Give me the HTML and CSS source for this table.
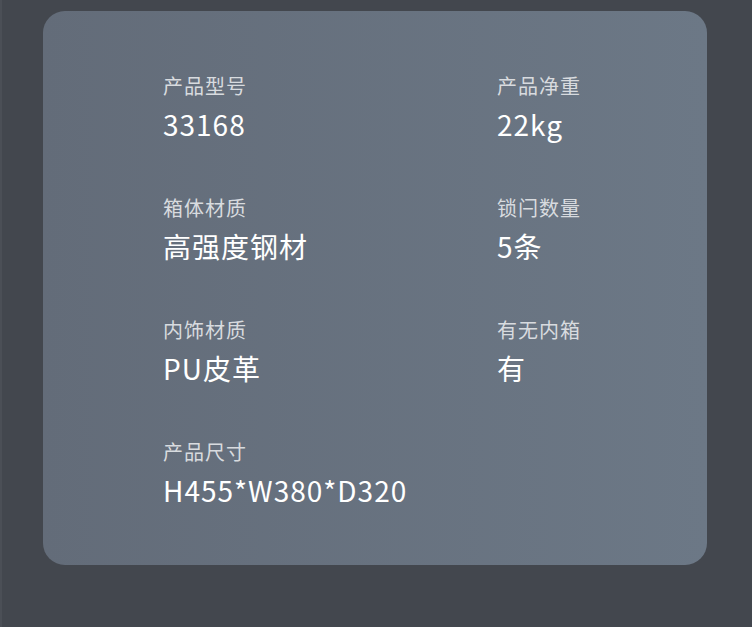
FILE: index.html
```html
<!DOCTYPE html>
<html lang="zh-CN">

<head>
    <meta charset="UTF-8">
    <meta name="viewport" content="width=device-width, initial-scale=1.0">
    <title>产品参数</title>
    <link rel="stylesheet" href="styles.css">
</head>

<body>
    <div class="page">
        <div class="card">
            <div class="spec">
                <p class="spec__label">产品型号</p>
                <p class="spec__value">33168</p>
            </div>
            <div class="spec">
                <p class="spec__label">产品净重</p>
                <p class="spec__value">22kg</p>
            </div>
            <div class="spec">
                <p class="spec__label">箱体材质</p>
                <p class="spec__value">高强度钢材</p>
            </div>
            <div class="spec">
                <p class="spec__label">锁闩数量</p>
                <p class="spec__value">5条</p>
            </div>
            <div class="spec">
                <p class="spec__label">内饰材质</p>
                <p class="spec__value">PU皮革</p>
            </div>
            <div class="spec">
                <p class="spec__label">有无内箱</p>
                <p class="spec__value">有</p>
            </div>
            <div class="spec">
                <p class="spec__label">产品尺寸</p>
                <p class="spec__value">H455*W380*D320</p>
            </div>
        </div>
    </div>
</body>

</html>
```

FILE: styles.css
```css
body {
    margin: 0;
    background: #43474e;
    font-family: "Noto Sans CJK SC", "Noto Sans", sans-serif;
}

.page {
    height: 627px;
    padding: 11px 45px 0 43px;
    box-sizing: border-box;
    border-left: 2px solid #4b4f56;
}

.card {
    display: grid;
    grid-template-columns: 334px 1fr;
    row-gap: 46px;
    height: 554px;
    box-sizing: border-box;
    margin-left: -2px;
    padding: 55px 20px 0 120px;
    border-radius: 22px;
    background: linear-gradient(90deg, #636c79, #6c7886);
    align-content: start;
}

.spec p {
    margin: 0;
}

.spec__label {
    font-size: 20px;
    line-height: 40px;
    letter-spacing: 1px;
    color: #d8dbdf;
}

.spec__value {
    font-size: 28px;
    line-height: 36px;
    letter-spacing: 1px;
    color: #fff;
}
```
